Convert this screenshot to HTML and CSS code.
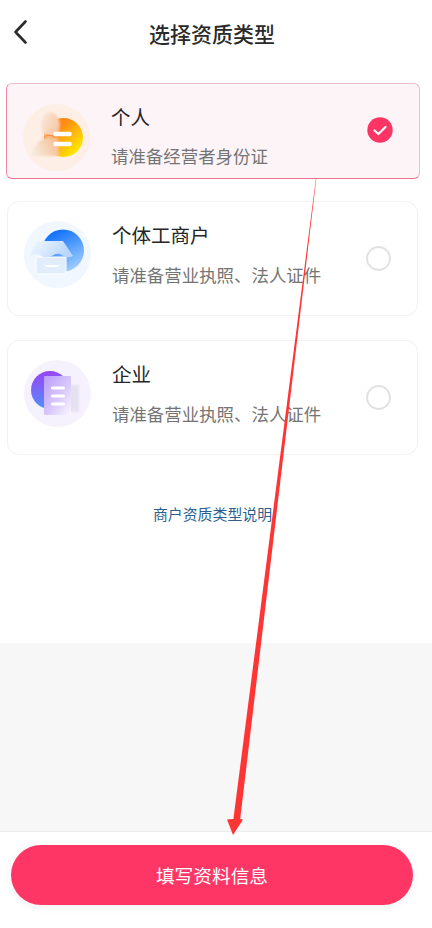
FILE: index.html
```html
<!DOCTYPE html>
<html lang="zh-CN">
<head>
<meta charset="utf-8">
<title>选择资质类型</title>
<link rel="stylesheet" href="styles.css">
</head>
<body>
<div class="page">
  <header class="nav">
    <svg class="back" width="16" height="26" viewBox="0 0 16 26"><path d="M13.5 2.5 L3.5 13 L13.5 23.5" fill="none" stroke="#2b2b2b" stroke-width="2.6" stroke-linecap="round" stroke-linejoin="round"/></svg>
    <h1 class="nav-title">选择资质类型</h1>
  </header>
  <main class="main">
    <section class="card card-on">
      <svg class="icon" width="67" height="67" viewBox="0 0 67 67">
        <defs>
          <linearGradient id="o" x1="0.2" y1="0.1" x2="0.9" y2="0.8"><stop offset="0.25" stop-color="#ff8a14"/><stop offset="1" stop-color="#ffe800"/></linearGradient>
          <linearGradient id="head" x1="0" y1="0" x2="1" y2="0.6"><stop offset="0" stop-color="#fbeadd"/><stop offset="1" stop-color="#f6c7a4"/></linearGradient>
          <linearGradient id="body" x1="0" y1="0.6" x2="1" y2="0.3"><stop offset="0" stop-color="#f6ecdf"/><stop offset="1" stop-color="#f7bd91"/></linearGradient>
          <filter id="b1" x="-20%" y="-20%" width="140%" height="140%"><feGaussianBlur stdDeviation="0.6"/></filter>
          <filter id="b2" x="-30%" y="-30%" width="160%" height="160%"><feGaussianBlur stdDeviation="1.3"/></filter>
        </defs>
        <circle cx="33.5" cy="33.5" r="33.5" fill="#fdeee6"/>
        <circle cx="40.5" cy="33.5" r="19.5" fill="url(#o)" filter="url(#b1)"/>
        <ellipse cx="27.5" cy="21" rx="9.5" ry="12.5" fill="url(#head)" filter="url(#b2)"/>
        <path d="M8 52 C10 43 16 35 25 33 L35 34 L36 52 Z" fill="url(#body)" filter="url(#b2)"/>
        <path d="M23 31 L36 32.5" stroke="#f8924a" stroke-width="1.3" fill="none"/>
        <path d="M32.5 30 H46.5 M32.5 40 H46.5" stroke="#fff" stroke-width="4.6" stroke-linecap="round"/>
      </svg>
      <div class="text">
        <div class="name">个人</div>
        <div class="desc">请准备经营者身份证</div>
      </div>
      <svg class="radio radio-top" width="26" height="26" viewBox="0 0 26 26"><circle cx="13" cy="13" r="12.7" fill="#fd3564"/><path d="M7.5 13.5 L11.4 17 L18.5 10" fill="none" stroke="#fff" stroke-width="2.2" stroke-linecap="round" stroke-linejoin="round"/></svg>
    </section>

    <section class="card card-tall">
      <svg class="icon" width="67" height="67" viewBox="0 0 67 67">
        <defs>
          <linearGradient id="bl" x1="0.3" y1="0" x2="0.8" y2="1"><stop offset="0" stop-color="#0b6dff"/><stop offset="1" stop-color="#a8d4ff"/></linearGradient>
          <linearGradient id="roof" x1="0" y1="0" x2="1" y2="0.3"><stop offset="0" stop-color="#f6faff"/><stop offset="1" stop-color="#b9d6fc"/></linearGradient>
        </defs>
        <circle cx="33.5" cy="33.5" r="33.5" fill="#f0f7fe"/>
        <circle cx="39" cy="29.5" r="21" fill="url(#bl)" filter="url(#b1)"/>
        <path d="M12 36 H42 V52 Q42 53 41 53 H13 Q12 53 12 52 Z" fill="#e2edfc" stroke="#fff" stroke-width="1" filter="url(#b1)"/>
        <path d="M12 20 H39 L49 35 Q43 38 38 34 Q33 31 28 35 Q22 38 17 34.5 Q11 31.5 5 35.5 Z" fill="url(#roof)" filter="url(#b1)"/>
        <path d="M22 45 H34" stroke="#fff" stroke-width="2" stroke-linecap="round"/>
      </svg>
      <div class="text">
        <div class="name">个体工商户</div>
        <div class="desc">请准备营业执照、法人证件</div>
      </div>
      <span class="radio radio-off"></span>
    </section>

    <section class="card card-tall card-last">
      <svg class="icon" width="67" height="67" viewBox="0 0 67 67">
        <defs>
          <linearGradient id="pu" x1="0.4" y1="0" x2="0.5" y2="1"><stop offset="0" stop-color="#9a45f6"/><stop offset="1" stop-color="#4f92ff"/></linearGradient>
          <linearGradient id="doc" x1="0" y1="0" x2="1" y2="1"><stop offset="0" stop-color="#bb9cf8"/><stop offset="0.55" stop-color="#d8c7fb"/><stop offset="1" stop-color="#faf8ff"/></linearGradient>
        </defs>
        <circle cx="33.5" cy="33.5" r="33.5" fill="#f6f2fd"/>
        <circle cx="26" cy="30" r="19" fill="url(#pu)" filter="url(#b1)"/>
        <rect x="44" y="25" width="11" height="27" fill="#e6e1f1" filter="url(#b2)"/>
        <rect x="20" y="16" width="27" height="39" rx="1" fill="url(#doc)" filter="url(#b1)"/>
        <path d="M28.5 28 H39.5 M28.5 36 H39.5 M28.5 44 H39.5" stroke="#fff" stroke-width="3.2" stroke-linecap="round"/>
      </svg>
      <div class="text">
        <div class="name">企业</div>
        <div class="desc">请准备营业执照、法人证件</div>
      </div>
      <span class="radio radio-off"></span>
    </section>

    <p class="link">商户资质类型说明</p>
  </main>
  <div class="filler"></div>
  <footer class="footer">
    <div class="btn">填写资料信息</div>
  </footer>
  <svg class="arrow" width="432" height="928" viewBox="0 0 432 928">
    <path d="M316 178 L316.4 178 L240.2 819 L243 819.5 L233 835 L227 819.5 L233.4 819 Z" fill="#fe3535"/>
  </svg>
</div>
</body>
</html>
```
FILE: styles.css
```css
* { box-sizing: border-box; margin: 0; padding: 0; }
html, body { width: 432px; height: 928px; overflow: hidden; background: #fff; }
body { font-family: "Noto Sans CJK SC", "Noto Sans", sans-serif; }
.page { position: relative; width: 432px; height: 928px; display: flex; flex-direction: column; }

.nav { height: 66px; flex: none; display: flex; align-items: center; justify-content: center; position: relative; padding-right: 8px; }
.back { position: absolute; left: 12px; top: 19px; }
.nav-title { font-size: 21px; font-weight: 500; color: #2a2a2a; line-height: 30px; }

.main { height: 577px; flex: none; background: #fff; padding-top: 17px; display: flex; flex-direction: column; }
.card { display: flex; align-items: flex-start; background: #fff; border: 1px solid #f1f1f1; border-radius: 12px; padding: 19px 26px 0 16px; margin: 0 14px 24px 7px; height: 115px; }
.card-on { height: 96px; margin: 0 12px 22px 6px; background: #fdf4f8; border-color: #ebbccb #ebbccb #ec7092 #ec8aa6; border-radius: 6px; padding: 20px 26px 0 16px; }
.card-last { margin-bottom: 0; }
.icon { flex: none; display: block; filter: blur(0.3px); }
.text { margin-left: 21px; flex: 1; }
.card-on .text { margin-top: -1px; }
.name { font-size: 19.5px; line-height: 28px; color: #262626; }
.desc { font-size: 17.45px; line-height: 24px; color: #747474; margin-top: 14px; white-space: nowrap; }
.card-on .desc { margin-top: 13px; }
.radio { flex: none; display: block; margin-top: 25px; }
.radio-top { margin-top: 13px; }
.radio-off { width: 25px; height: 25px; border: 2px solid #e2e2e2; border-radius: 50%; background: #fff; }

.link { margin-top: 49px; padding-right: 7px; text-align: center; font-size: 14.9px; line-height: 20px; color: #2c5f8f; }

.filler { flex: 1; background: #f7f7f7; }
.footer { height: 97px; flex: none; background: #fff; border-top: 1px solid #ebebeb; padding: 13px 19px 0 11px; }
.btn { height: 60px; border-radius: 30px; background: #fe3665; color: #fff; font-size: 18.7px; line-height: 60px; text-align: center; box-shadow: 0 2px 10px rgba(0,0,0,0.06); }

.arrow { position: absolute; left: 0; top: 0; pointer-events: none; }
```
